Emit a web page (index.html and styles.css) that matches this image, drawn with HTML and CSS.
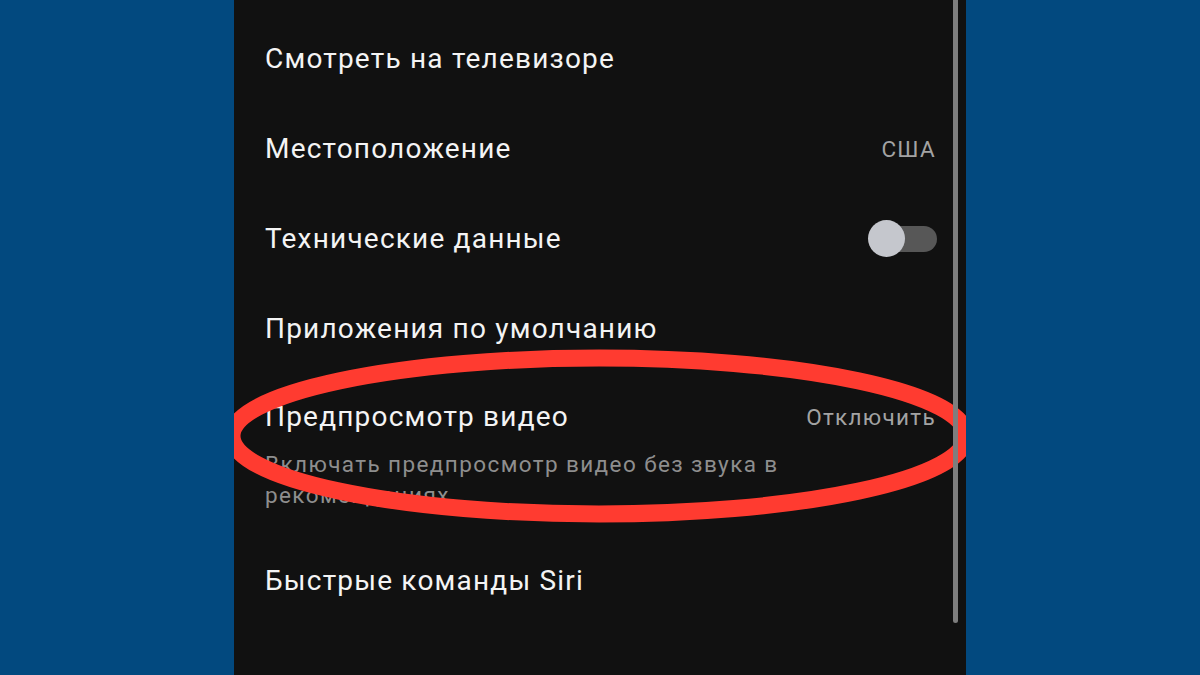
FILE: index.html
```html
<!DOCTYPE html>
<html>
<head>
  <title>Настройки</title>
  <link rel="stylesheet" href="styles.css">
</head>
<body>
  <div class="panel">
    <div class="row">
      <span class="title">Смотреть на телевизоре</span>
    </div>
    <div class="row">
      <span class="title">Местоположение</span>
      <span class="value">США</span>
    </div>
    <div class="row">
      <span class="title">Технические данные</span>
      <span class="toggle"><span class="knob"></span></span>
    </div>
    <div class="row">
      <span class="title">Приложения по умолчанию</span>
    </div>
    <div class="row-tall">
      <div class="line">
        <span class="title">Предпросмотр видео</span>
        <span class="value">Отключить</span>
      </div>
      <p class="sub">Включать предпросмотр видео без звука в рекомендациях</p>
    </div>
    <div class="row">
      <span class="title">Быстрые команды Siri</span>
    </div>

    <svg class="mark" width="732" height="675" viewBox="234 0 732 675">
      <ellipse cx="599" cy="436" rx="367" ry="78" fill="none" stroke="#ff3b30" stroke-width="17"/>
    </svg>
    <div class="scrollbar"></div>
  </div>
</body>
</html>
```

FILE: styles.css
```css
html, body {
  margin: 0;
  height: 100%;
}

body {
  background-color: #02497f;
  font-family: Roboto, "Noto Sans", sans-serif;
  display: flex;
  justify-content: center;
}

.panel {
  position: relative;
  width: 732px;
  height: 675px;
  background-color: #111111;
  overflow: hidden;
  box-sizing: border-box;
  padding: 14px 31px 0 31px;
}

.row {
  height: 90px;
  display: flex;
  align-items: center;
  justify-content: space-between;
}

.row-tall {
  padding: 26px 0 25px 0;
}

.line {
  display: flex;
  align-items: center;
  justify-content: space-between;
}

.title {
  color: #f4f4f4;
  font-size: 28px;
  line-height: 34px;
  letter-spacing: 1.2px;
}

.value {
  color: #a3a3a3;
  font-size: 22.5px;
  line-height: 34px;
  letter-spacing: 1.3px;
  margin-right: -1px;
}

.sub {
  margin: 15px 0 0 0;
  max-width: 560px;
  color: #8e8e8e;
  font-size: 22.5px;
  line-height: 31px;
  letter-spacing: 1.4px;
}

.toggle {
  position: relative;
  width: 68px;
  height: 26px;
  margin-right: -2px;
  border-radius: 13px;
  background-color: #575757;
}

.knob {
  position: absolute;
  left: -1px;
  top: -6px;
  width: 37px;
  height: 37px;
  border-radius: 50%;
  background-color: #c5c7cd;
}

.mark {
  position: absolute;
  left: 0;
  top: 0;
}

.scrollbar {
  position: absolute;
  right: 8px;
  top: -10px;
  width: 5px;
  height: 633px;
  border-radius: 3px;
  background-color: #7e7e7e;
}
```
